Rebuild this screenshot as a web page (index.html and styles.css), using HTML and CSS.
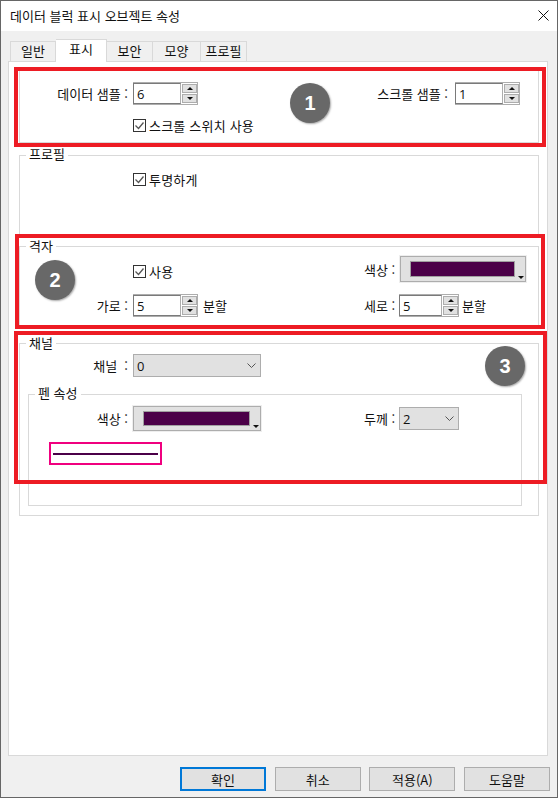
FILE: index.html
```html
<!DOCTYPE html>
<html lang="ko">

<head>
  <meta charset="UTF-8">
  <meta name="viewport" content="width=device-width, initial-scale=1.0">
  <title>데이터 블럭 표시 오브젝트 속성</title>
  <link rel="stylesheet" href="styles.css">
</head>

<body>
  <div class="window">
    <div class="titlebar">
      <span>데이터 블럭 표시 오브젝트 속성</span>
      <svg class="close" width="11" height="11" viewBox="0 0 11 11"><path d="M.5.5l10 10M10.500.5l-10 10" stroke="#111" fill="none" /></svg>
    </div>

    <div class="tabs">
      <div class="tab">일반</div>
      <div class="tab active">표시</div>
      <div class="tab">보안</div>
      <div class="tab">모양</div>
      <div class="tab">프로필</div>
    </div>

    <div class="panel">
      <div class="group group-sample">
        <div class="row">
          <div class="field">
            <span class="label">데이터 샘플 :</span>
            <div class="spin"><span class="spin-value">6</span><div class="spin-btns"><i class="up"></i><i class="down"></i></div></div>
          </div>
          <div class="field">
            <span class="label label-wide">스크롤 샘플 :</span>
            <div class="spin"><span class="spin-value">1</span><div class="spin-btns"><i class="up"></i><i class="down"></i></div></div>
          </div>
        </div>
        <div class="check-row">
          <label class="check"><svg width="13" height="13" viewBox="0 0 13 13"><rect x=".5" y=".5" width="12" height="12" fill="#fff" stroke="#333" /><path d="M2.500 6.500l3 3 5-6" fill="none" stroke="#555" stroke-width="1.300" /></svg>스크롤 스위치 사용</label>
        </div>
      </div>

      <div class="group group-profile">
        <span class="legend legend-high">프로필</span>
        <div class="check-row">
          <label class="check"><svg width="13" height="13" viewBox="0 0 13 13"><rect x=".5" y=".5" width="12" height="12" fill="#fff" stroke="#333" /><path d="M2.500 6.500l3 3 5-6" fill="none" stroke="#555" stroke-width="1.300" /></svg>투명하게</label>
        </div>
      </div>

      <div class="group group-grid">
        <span class="legend">격자</span>
        <div class="row row-tall">
          <div class="check-cell">
            <label class="check"><svg width="13" height="13" viewBox="0 0 13 13"><rect x=".5" y=".5" width="12" height="12" fill="#fff" stroke="#333" /><path d="M2.500 6.500l3 3 5-6" fill="none" stroke="#555" stroke-width="1.300" /></svg>사용</label>
          </div>
          <div class="field">
            <span class="label label-short">색상 :</span>
            <div class="color-btn color-wide"><span class="swatch"></span></div>
          </div>
        </div>
        <div class="row row-next">
          <div class="field">
            <span class="label">가로 :</span>
            <div class="spin"><span class="spin-value">5</span><div class="spin-btns"><i class="up"></i><i class="down"></i></div></div>
            <span>분할</span>
          </div>
          <div class="field">
            <span class="label label-short">세로 :</span>
            <div class="spin spin-small"><span class="spin-value">5</span><div class="spin-btns"><i class="up"></i><i class="down"></i></div></div>
            <span class="unit-tight">분할</span>
          </div>
        </div>
      </div>

      <div class="group group-channel">
        <span class="legend">채널</span>
        <div class="field">
          <span class="label">채널 &nbsp;:</span>
          <div class="select select-wide">0<svg width="9" height="5" viewBox="0 0 9 5"><path d="M.5.500l4 4 4-4" fill="none" stroke="#555" /></svg></div>
        </div>

        <div class="group group-pen">
          <span class="legend legend-high">펜 속성</span>
          <div class="row row-pen">
            <div class="field">
              <span class="label label-pen">색상 :</span>
              <div class="color-btn"><span class="swatch"></span></div>
            </div>
            <div class="field">
              <span class="label label-short">두께 :</span>
              <div class="select">2<svg width="9" height="5" viewBox="0 0 9 5"><path d="M.5.500l4 4 4-4" fill="none" stroke="#555" /></svg></div>
            </div>
          </div>
          <div class="pen-preview"><div class="pen-line"></div></div>
        </div>
      </div>
    </div>

    <div class="footer">
      <button class="btn btn-default">확인</button>
      <button class="btn">취소</button>
      <button class="btn">적용(A)</button>
      <button class="btn">도움말</button>
    </div>
  </div>

  <!-- 설명용 표시 -->
  <div class="mark mark-1"></div>
  <div class="mark mark-2"></div>
  <div class="mark mark-3"></div>
  <div class="num num-1">1</div>
  <div class="num num-2">2</div>
  <div class="num num-3">3</div>
</body>

</html>
```

FILE: styles.css
```css
body {
  font-family: "Noto Sans CJK KR", "Liberation Sans", sans-serif;
  font-size: 13px;
  color: #111;
  background-color: #fff;
  margin: 0;
  padding: 0;
  position: relative;
  height: 799px;
  overflow: hidden;
}

.window {
  display: flex;
  flex-direction: column;
  height: 798px;
  box-sizing: border-box;
  border: 1px solid #666;
  background-color: #f0f0f0;
}

.titlebar {
  display: flex;
  align-items: center;
  justify-content: space-between;
  height: 30px;
  box-sizing: border-box;
  padding: 0 9px 2px;
  background-color: #fff;
}

.close {
  margin-right: -0.500px;
}

.tabs {
  display: flex;
  align-items: flex-end;
  height: 22px;
  margin-top: 8px;
  padding-left: 9px;
}

.tab {
  width: 46px;
  height: 20px;
  box-sizing: border-box;
  border: 1px solid #d9d9d9;
  border-bottom: none;
  border-left: none;
  text-align: center;
  line-height: 18px;
  background-color: #f0f0f0;
}

.tab:first-child {
  border-left: 1px solid #d9d9d9;
}

.tab:nth-child(4) {
  width: 48px;
}

.tab.active {
  position: relative;
  width: 51px;
  height: 23px;
  margin-bottom: -1px;
  background-color: #fff;
  line-height: 17px;
  z-index: 1;
}

.panel {
  flex: 1;
  margin: 0 9px 0 7px;
  padding: 7px 8px 0 10px;
  border: 1px solid #d9d9d9;
  background-color: #fff;
}

.group {
  position: relative;
  box-sizing: border-box;
  border: 1px solid #d9d9d9;
}

.legend {
  position: absolute;
  top: -10px;
  left: 6px;
  padding: 0 3px;
  line-height: 18px;
  background-color: #fff;
}

.legend-high {
  top: -11px;
}

.group-sample {
  height: 74px;
  padding-top: 12px;
}

.group-profile {
  height: 83px;
  margin-top: 12px;
  padding-top: 15px;
}

.group-grid {
  height: 80px;
  margin-top: 8px;
  padding-top: 9px;
}

.group-channel {
  height: 173px;
  margin-top: 17px;
  padding-top: 10px;
}

.group-pen {
  height: 112px;
  margin: 17px 16px 0 8px;
  padding-top: 11px;
}

.row {
  display: grid;
  grid-template-columns: 344px 1fr;
  align-items: center;
  height: 23px;
}

.row-tall {
  height: 26px;
}

.row-next {
  margin-top: 12px;
}

.row-pen {
  grid-template-columns: 335px 1fr;
  height: 25px;
}

.field {
  display: flex;
  align-items: center;
  gap: 5px;
}

.label {
  width: 108px;
  text-align: right;
  white-space: nowrap;
}

.label-wide {
  width: 84px;
  margin-right: 2px;
}

.label-short {
  width: 30px;
}

.label-pen {
  width: 99px;
}

.unit-tight {
  margin-left: -2px;
}

.check-row {
  height: 16px;
  margin-top: 12px;
  padding-left: 113px;
}

.group-profile .check-row {
  margin-top: 0;
}

.check-cell {
  padding: 4px 0 0 113px;
}

.check {
  display: flex;
  align-items: center;
  gap: 3px;
  height: 16px;
  letter-spacing: 0.200px;
}

.spin {
  display: flex;
  width: 65px;
  height: 23px;
  box-sizing: border-box;
  border: 1px solid #adadad;
  border-left: none;
}

.spin-small {
  width: 60px;
}

.spin-value {
  flex: 1;
  border: 1px solid #7a7a7a;
  border-right-color: #adadad;
  padding-left: 3px;
  line-height: 21px;
  font-family: "Open Sans", sans-serif;
  font-size: 13px;
}

.spin-btns {
  display: flex;
  flex-direction: column;
  justify-content: space-between;
  width: 16px;
  padding: 1px 0 1px 1px;
  box-sizing: border-box;
}

.spin-btns i {
  display: flex;
  align-items: center;
  justify-content: center;
  height: 9px;
  box-sizing: border-box;
  border: 1px solid #adadad;
  background-color: #e1e1e1;
}

.spin-btns .up::after {
  content: "";
  border: 3px solid transparent;
  border-top: none;
  border-bottom: 3px solid #111;
}

.spin-btns .down::after {
  content: "";
  border: 3px solid transparent;
  border-bottom: none;
  border-top: 3px solid #111;
}

.color-btn {
  position: relative;
  width: 128px;
  height: 25px;
  box-sizing: border-box;
  padding: 4px 10px 4px 9px;
  border: 1px solid #adadad;
  background-color: #e1e1e1;
  box-shadow: 0 0 0 1px #eee;
}

.color-wide {
  width: 126px;
  height: 26px;
  margin-left: 1px;
}

.color-btn::after {
  content: "";
  position: absolute;
  right: 1px;
  bottom: 2px;
  border: 3px solid transparent;
  border-bottom: none;
  border-top: 3px solid #111;
}

.swatch {
  display: block;
  height: 100%;
  box-sizing: border-box;
  background-color: #4b0048;
  border: 1px solid #a0a0a0;
}

.select {
  display: flex;
  align-items: center;
  justify-content: space-between;
  width: 60px;
  height: 23px;
  box-sizing: border-box;
  padding: 0 4px 0 3px;
  border: 1px solid #adadad;
  background-color: #e1e1e1;
  font-family: "Open Sans", sans-serif;
  font-size: 13px;
}

.select-wide {
  width: 128px;
}

.pen-preview {
  display: flex;
  align-items: center;
  box-sizing: border-box;
  width: 113px;
  height: 23px;
  margin: 11px 0 0 20px;
  padding: 0 2px;
  border: 2px solid #f0007f;
}

.pen-line {
  flex: 1;
  height: 2px;
  background-color: #4b0048;
}

.footer {
  display: flex;
  justify-content: flex-end;
  gap: 8.670px;
  height: 41px;
  padding: 11px 7px 0 0;
  box-sizing: border-box;
}

.btn {
  width: 86px;
  height: 24px;
  padding: 0;
  border: 1px solid #adadad;
  background-color: #e1e1e1;
  font-family: inherit;
  font-size: 13px;
  color: #111;
}

.btn-default {
  border: 2px solid #0078d7;
}

.mark {
  position: absolute;
  box-sizing: border-box;
  border: 4px solid #ed1c24;
}

.mark-1 {
  left: 14px;
  top: 67px;
  width: 532px;
  height: 80px;
}

.mark-2 {
  left: 15px;
  top: 234px;
  width: 530px;
  height: 95px;
}

.mark-3 {
  left: 14px;
  top: 331px;
  width: 533px;
  height: 153px;
}

.num {
  position: absolute;
  width: 40px;
  height: 40px;
  border-radius: 50%;
  background-color: #686868;
  box-shadow: 1px 1px 2px rgba(0, 0, 0, 0.35);
  color: #fff;
  font-family: "Liberation Sans", sans-serif;
  font-size: 20px;
  font-weight: bold;
  line-height: 40px;
  text-align: center;
}

.num-1 {
  left: 290px;
  top: 83px;
}

.num-2 {
  left: 35px;
  top: 260px;
}

.num-3 {
  left: 485px;
  top: 346px;
}
```
